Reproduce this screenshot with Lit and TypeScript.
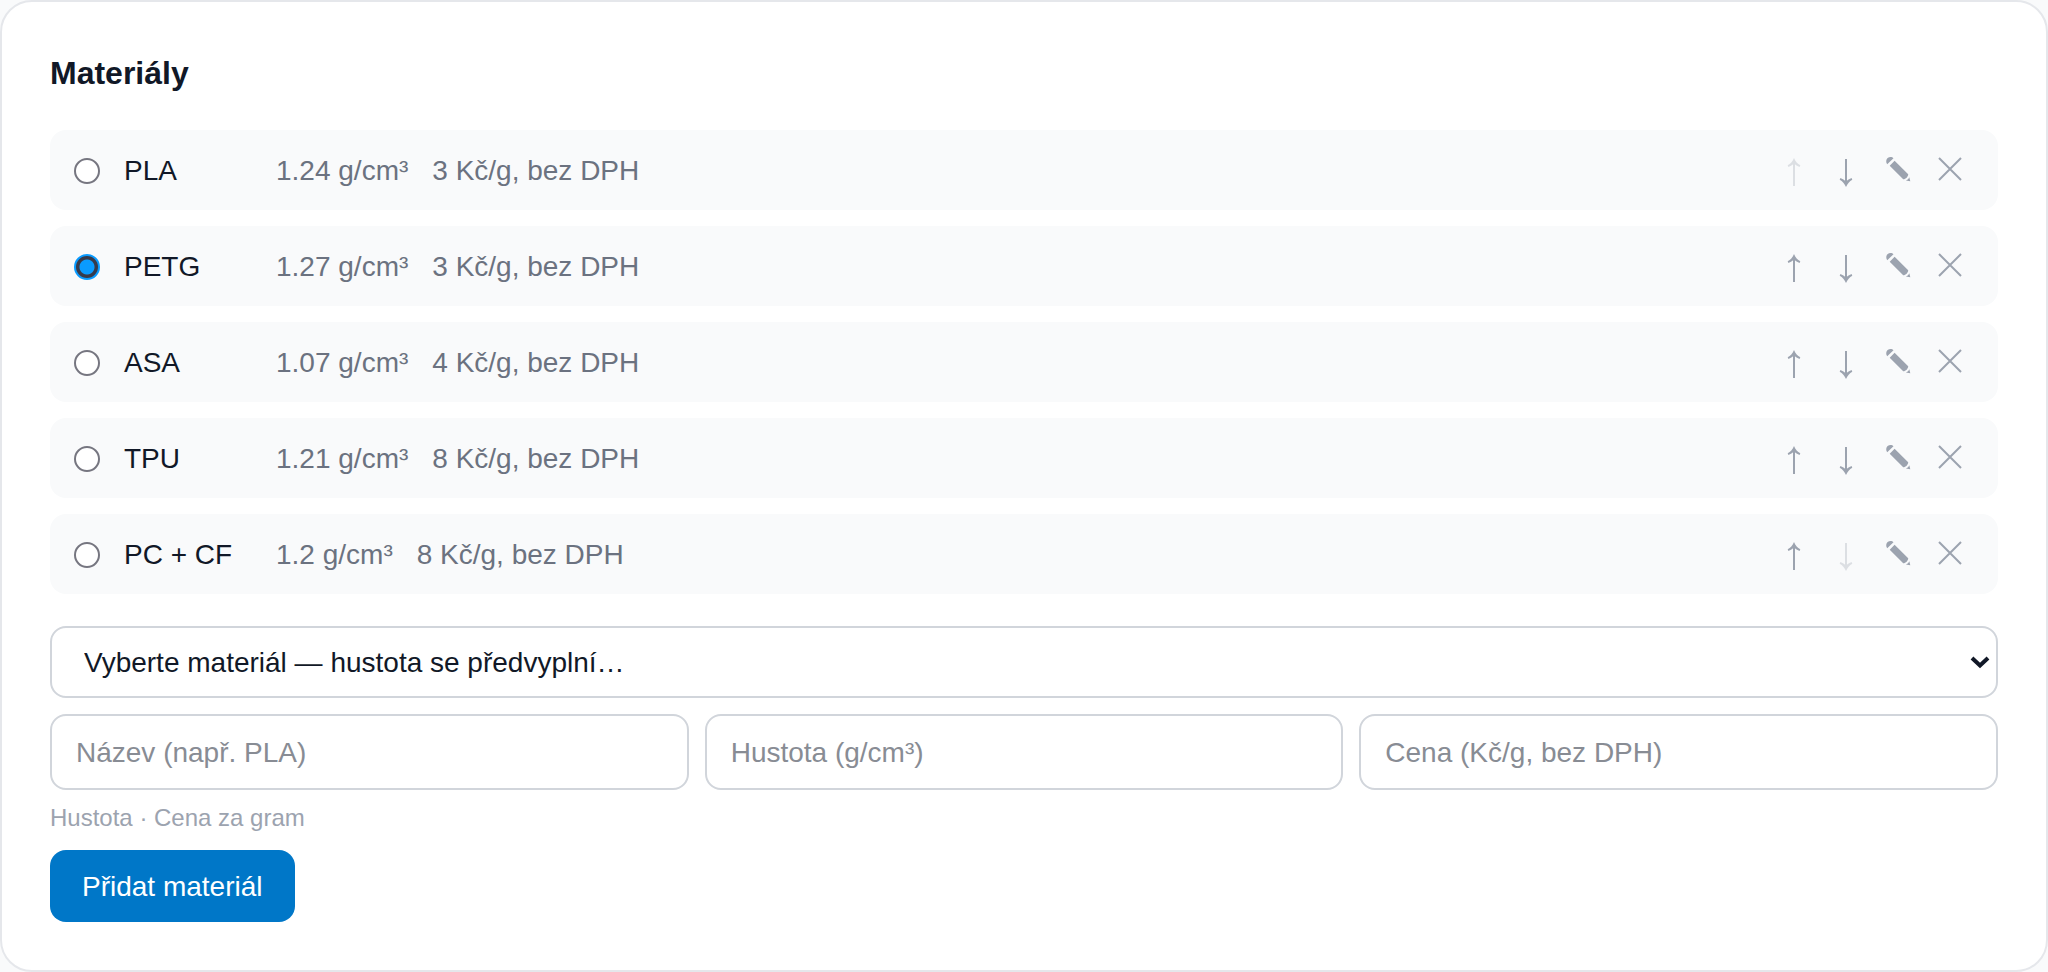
import { LitElement, html, css, svg } from "lit";
import { customElement, state } from "lit/decorators.js";

interface Material {
  name: string;
  density: string;
  price: string;
}

const icons = {
  up: svg`<path d="M12 32V7" /><path class="solid" d="M12 4C13.500 7.500 15.500 9.800 18.300 11.300L17.600 12.900C15.500 12.200 13.500 10.800 12 9.200C10.500 10.800 8.500 12.200 6.400 12.900L5.700 11.300C8.500 9.800 10.500 7.500 12 4Z" />`,
  down: svg`<path d="M12 5V30" /><path class="solid" d="M12 33C13.500 29.500 15.500 27.200 18.300 25.700L17.600 24.100C15.500 24.800 13.500 26.200 12 27.800C10.500 26.200 8.500 24.800 6.400 24.100L5.700 25.700C8.500 27.200 10.500 29.500 12 33Z" />`,
  close: svg`<path d="M1 1L23 23M23 1L1 23" />`,
};

@customElement("app-root")
export class AppRoot extends LitElement {
  static styles = css`
    :host {
      display: block;
      background: #f9fafb;
      color: #111827;
      font-family: "Liberation Sans", Arial, sans-serif;
      font-size: 28px;
      line-height: 40px;
    }
    * { box-sizing: border-box; }
    .card {
      background: #fff;
      border: 2px solid #e5e7eb;
      border-radius: 32px;
      padding: 48px;
    }
    .title {
      margin: 0 0 34px;
      font-size: 32px;
      line-height: 46px;
      font-weight: 700;
    }
    .list {
      display: flex;
      flex-direction: column;
      gap: 16px;
      margin: 0 0 32px;
      padding: 0;
      list-style: none;
    }
    .row {
      display: flex;
      align-items: center;
      gap: 24px;
      padding: 21px 24px 19px;
      border-radius: 16px;
      background: #f9fafb;
    }
    .choice { display: flex; align-items: center; gap: 24px; }
    .radio {
      appearance: none;
      flex: none;
      width: 26px;
      height: 26px;
      margin: 0;
      border: 2px solid #767680;
      border-radius: 50%;
      background: #fff;
    }
    .radio:checked {
      border-color: #0a9bff;
      background: radial-gradient(circle, #0a9bff 7px, #373a4b 8px);
    }
    .name { width: 128px; }
    .meta { color: #6b7280; }
    .actions { display: flex; gap: 4px; margin-left: auto; }
    .action {
      display: flex;
      align-items: center;
      justify-content: center;
      width: 48px;
      height: 40px;
      padding: 0;
      border: 0;
      background: none;
      color: #9ca3af;
    }
    .action:disabled { opacity: 0.3; }
    .icon { display: block; overflow: visible; fill: none; stroke: currentColor; stroke-width: 2; }
    .solid { fill: currentColor; stroke: none; }
    .form { display: flex; flex-direction: column; gap: 16px; }
    .picker { display: grid; align-items: center; }
    .select, .input {
      width: 100%;
      border: 2px solid #d1d5db;
      border-radius: 16px;
      background: #fff;
      color: inherit;
      font: inherit;
    }
    .select {
      grid-area: 1 / 1;
      appearance: none;
      height: 72px;
      padding: 2px 32px 0;
    }
    .chevron {
      grid-area: 1 / 1;
      justify-self: end;
      margin-right: 8px;
      pointer-events: none;
      stroke-width: 4;
    }
    .fields { display: grid; grid-template-columns: repeat(3, 1fr); gap: 16px; }
    .input { height: 76px; padding: 17px 24px 15px; }
    .input::placeholder { color: #888c94; opacity: 1; }
    .hint {
      margin: 12px 0 16px;
      color: #9ca3af;
      font-size: 24px;
      line-height: 32px;
    }
    .submit {
      display: block;
      padding: 17px 32px 15px;
      border: 0;
      border-radius: 16px;
      background: #0077c8;
      color: #fff;
      font: inherit;
    }
  `;

  @state() private selected = "PETG";

  @state() private materials: Material[] = [
    { name: "PLA", density: "1.24", price: "3" },
    { name: "PETG", density: "1.27", price: "3" },
    { name: "ASA", density: "1.07", price: "4" },
    { name: "TPU", density: "1.21", price: "8" },
    { name: "PC + CF", density: "1.2", price: "8" },
  ];

  private move(index: number, step: number) {
    const next = [...this.materials];
    [next[index], next[index + step]] = [next[index + step], next[index]];
    this.materials = next;
  }

  private remove(index: number) {
    this.materials = this.materials.filter((_, i) => i !== index);
  }

  private renderRow(m: Material, i: number) {
    return html`
      <li class="row">
        <label class="choice">
          <input class="radio" type="radio" name="material" .value=${m.name}
            .checked=${m.name === this.selected} @change=${() => (this.selected = m.name)} />
          <span class="name">${m.name}</span>
        </label>
        <span class="meta">${m.density} g/cm³</span>
        <span class="meta">${m.price} Kč/g, bez DPH</span>
        <div class="actions">
          <button class="action" type="button" aria-label="Nahoru" ?disabled=${i === 0}
            @click=${() => this.move(i, -1)}>
            <svg class="icon" width="24" height="34" viewBox="0 0 24 34">${icons.up}</svg>
          </button>
          <button class="action" type="button" aria-label="Dolů"
            ?disabled=${i === this.materials.length - 1} @click=${() => this.move(i, 1)}>
            <svg class="icon" width="24" height="34" viewBox="0 0 24 34">${icons.down}</svg>
          </button>
          <button class="action" type="button" aria-label="Upravit">
            <svg class="icon solid" width="24" height="28" viewBox="0 0 24 28">
              <path d="M1.200 7.200C-0.800 4.500 0.500 0 4.500 0C5.800 0 6.800 0.500 7.500 1.300ZM3.700 8.700L8.600 3.700L22.200 17.200C22.200 19.500 19.800 22.200 17.200 22.300ZM19.800 23.500C21.500 23 22.800 21.800 23.300 20.300L24.300 24.300Z" />
            </svg>
          </button>
          <button class="action" type="button" aria-label="Odstranit" @click=${() => this.remove(i)}>
            <svg class="icon" width="24" height="28" viewBox="0 0 24 28">${icons.close}</svg>
          </button>
        </div>
      </li>
    `;
  }

  render() {
    return html`
      <section class="card">
        <h2 class="title">Materiály</h2>
        <ul class="list">${this.materials.map((m, i) => this.renderRow(m, i))}</ul>
        <div class="form">
          <div class="picker">
            <select class="select" aria-label="Materiál">
              <option>Vyberte materiál — hustota se předvyplní…</option>
            </select>
            <svg class="icon chevron" width="20" height="14" viewBox="0 0 20 14">
              <path d="M2 3L10 10.500L18 3" />
            </svg>
          </div>
          <div class="fields">
            <input class="input" type="text" aria-label="Název" placeholder="Název (např. PLA)" />
            <input class="input" type="text" aria-label="Hustota" placeholder="Hustota (g/cm³)" />
            <input class="input" type="text" aria-label="Cena" placeholder="Cena (Kč/g, bez DPH)" />
          </div>
        </div>
        <p class="hint">Hustota · Cena za gram</p>
        <button class="submit" type="button">Přidat materiál</button>
      </section>
    `;
  }
}
